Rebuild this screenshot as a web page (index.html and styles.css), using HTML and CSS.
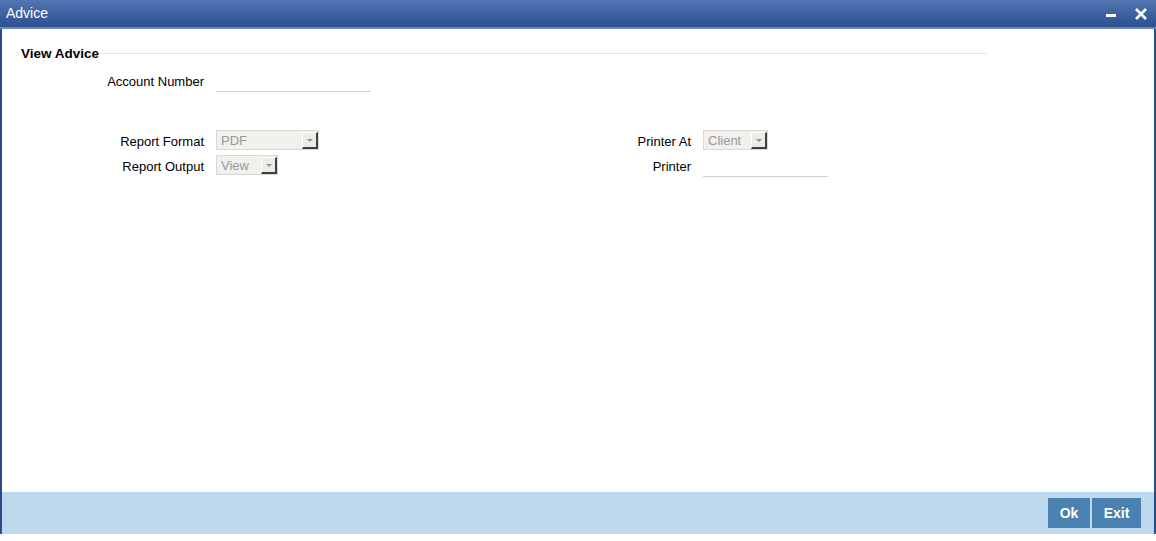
FILE: index.html
```html
<!DOCTYPE html>
<html lang="en">
<head>
    <meta charset="UTF-8">
    <title>Advice</title>
    <link rel="stylesheet" href="styles.css">
</head>
<body>
    <div class="window">
        <header class="titlebar">
            <span class="title">Advice</span>
            <div class="controls">
                <svg class="ctl" width="12" height="12" viewBox="0 0 12 12"><rect x="1" y="6" width="10" height="3" fill="#fff"/></svg>
                <svg class="ctl" width="14" height="14" viewBox="0 0 14 14"><path d="M2 2 L12 12 M12 2 L2 12" stroke="#fff" stroke-width="2.6"/></svg>
            </div>
        </header>

        <main class="content">
            <div class="legend">
                <span class="legend-text">View Advice</span>
                <span class="legend-line"></span>
            </div>

            <div class="row">
                <label class="lbl up">Account Number</label>
                <span class="field-line acc"></span>
            </div>

            <div class="columns">
                <div class="col left">
                    <div class="row tight">
                        <label class="lbl down">Report Format</label>
                        <div class="select w-pdf"><span>PDF</span><i class="arrow"></i></div>
                    </div>
                    <div class="row tight">
                        <label class="lbl down">Report Output</label>
                        <div class="select w-view"><span>View</span><i class="arrow"></i></div>
                    </div>
                </div>
                <div class="col right">
                    <div class="row tight">
                        <label class="lbl down">Printer At</label>
                        <div class="select w-client"><span>Client</span><i class="arrow"></i></div>
                    </div>
                    <div class="row tight">
                        <label class="lbl down">Printer</label>
                        <span class="field-line printer"></span>
                    </div>
                </div>
            </div>
        </main>

        <footer class="actions">
            <button class="btn ok">Ok</button>
            <button class="btn exit">Exit</button>
        </footer>
    </div>
</body>
</html>
```

FILE: styles.css
```css
body {
    margin: 0;
    padding: 0;
    background: #fff;
    font-family: "Liberation Sans", Arial, sans-serif;
    font-size: 13px;
    color: #000;
}

.window {
    width: 1156px;
    height: 534px;
    box-sizing: border-box;
    border-left: 2px solid #2b4c8c;
    border-right: 2px solid #2b4c8c;
    display: flex;
    flex-direction: column;
}

.titlebar {
    height: 27px;
    margin: 0 -2px;
    padding: 0 8px 0 6px;
    background: linear-gradient(#5176b0, #2c4f90);
    border-bottom: 2px solid #6d89b3;
    display: flex;
    align-items: center;
    justify-content: space-between;
    color: #fff;
}

.title {
    font-size: 14px;
    margin-top: -2px;
}

.controls {
    display: flex;
    align-items: center;
    gap: 17px;
}

.content {
    flex: 1;
    padding-top: 16px;
}

.legend {
    display: flex;
    align-items: center;
    width: 966px;
    margin-left: 19px;
    height: 16px;
}

.legend-text {
    font-weight: bold;
    font-size: 13.5px;
}

.legend-line {
    flex: 1;
    height: 1px;
    background: #e4e4e4;
    margin-left: 1px;
}

.row {
    display: flex;
    align-items: center;
    height: 20px;
    margin-top: 11px;
}

.row.tight {
    margin-top: 5px;
}

.row.tight:first-child {
    margin-top: 0;
}

.lbl {
    width: 202px;
    text-align: right;
    margin-right: 12px;
}

.lbl.up {
    margin-top: -2px;
}

.lbl.down {
    margin-top: 2px;
}

.field-line {
    height: 19px;
    border-bottom: 1px solid #d0d0d0;
}

.field-line.acc {
    width: 155px;
}

.field-line.printer {
    width: 125px;
    height: 21px;
    margin-top: 2px;
}

.columns {
    display: flex;
    margin-top: 38px;
}

.col.left {
    width: 489px;
}

.col.right .lbl {
    width: 200px;
}

.select {
    height: 20px;
    box-sizing: border-box;
    border: 1px solid #d8d8d4;
    background: #f1f0ec;
    color: #999;
    display: flex;
    align-items: center;
    justify-content: space-between;
    padding-left: 4px;
}

.w-pdf { width: 103px; }
.w-view { width: 62px; }
.w-client { width: 65px; }

.arrow {
    width: 16px;
    height: 17px;
    box-sizing: border-box;
    border-top: 1px solid #fff;
    border-left: 1px solid #fff;
    border-right: 2px solid #404040;
    border-bottom: 2px solid #404040;
    background: #ecebe6;
    position: relative;
}

.arrow::after {
    content: "";
    position: absolute;
    left: 4px;
    top: 6px;
    border-left: 3px solid transparent;
    border-right: 3px solid transparent;
    border-top: 3px solid #909090;
}

.actions {
    height: 42px;
    background: #bed9ed;
    display: flex;
    justify-content: flex-end;
    align-items: center;
    gap: 2px;
    padding-right: 13px;
}

.btn {
    height: 30px;
    padding: 0;
    border: none;
    background: #4a81b1;
    color: #fff;
    font-family: "Liberation Sans", Arial, sans-serif;
    font-weight: bold;
    font-size: 14px;
    cursor: pointer;
}

.btn.ok {
    width: 42px;
}

.btn.exit {
    width: 49px;
}
```
